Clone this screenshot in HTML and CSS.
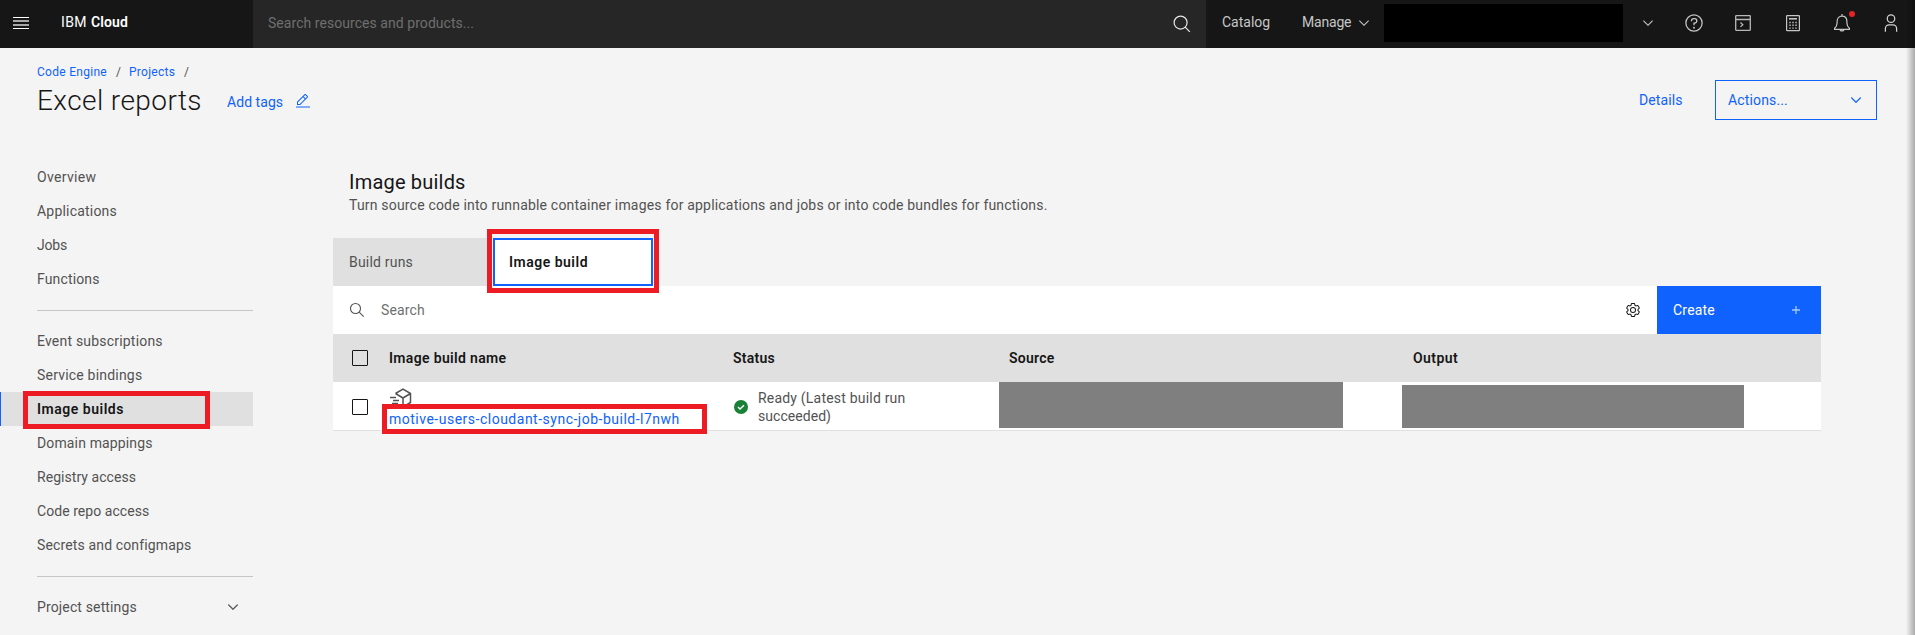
FILE: index.html
```
<!DOCTYPE html>
<html lang="en">
<head>
<meta charset="utf-8">
<title>Excel reports - Image builds</title>
<link rel="stylesheet" href="styles.css">
</head>
<body>
<header class="topbar">
  <div class="brand">
    <svg class="menu" width="16" height="12" viewBox="0 0 16 12"><path fill="#fff" d="M0 0h16v1H0zM0 11h16v1H0z"/><path fill="#a8a8a8" d="M0 3h16v2H0zM0 7h16v2H0z"/></svg>
    <span class="ibm">IBM</span><span class="cloud">Cloud</span>
  </div>
  <div class="global-search">
    <span class="hint">Search resources and products...</span>
    <svg width="18" height="18" viewBox="0 0 18 18" fill="none" stroke="#e8e8e8" stroke-width="1.2"><circle cx="7.6" cy="7.6" r="6.5"/><path d="M12.2 12.2l4.6 4.6"/></svg>
  </div>
  <nav class="links">
    <span class="catalog">Catalog</span>
    <span class="manage">Manage</span>
    <svg class="manage-chevron" width="16" height="16" viewBox="0 0 16 16" fill="#c6c6c6"><path d="M8 11L3 6l.7-.7L8 9.6l4.3-4.3.7.7z"/></svg>
    <span class="account"></span>
    <svg class="account-chevron" width="16" height="16" viewBox="0 0 16 16" fill="#c6c6c6"><path d="M8 11L3 6l.7-.7L8 9.6l4.3-4.3.7.7z"/></svg>
  </nav>
  <div class="tools">
    <svg width="20" height="20" viewBox="0 0 32 32" fill="#c6c6c6"><path d="M16 2a14 14 0 1 0 14 14A14 14 0 0 0 16 2zm0 26a12 12 0 1 1 12-12 12 12 0 0 1-12 12z"/><circle cx="16" cy="23.5" r="1.5"/><path d="M17 8h-1.500A4.490 4.490 0 0 0 11 12.500V13h2v-.5A2.500 2.500 0 0 1 15.500 10H17a2.500 2.500 0 0 1 0 5h-2v4.500h2V17a4.500 4.500 0 0 0 0-9z"/></svg>
    <svg width="20" height="20" viewBox="0 0 20 20" fill="none" stroke="#b8b8b8" stroke-width="1.300"><rect x="2.700" y="2.700" width="14.600" height="14.600" rx=".5"/><path d="M2.700 6.500h14.600M7.500 9.500l2.300 2.200-2.300 2.200"/></svg>
    <svg width="20" height="20" viewBox="0 0 20 20" fill="none" stroke="#c6c6c6" stroke-width="1.200"><rect x="3.600" y="2.600" width="12.800" height="15" rx=".6"/><path stroke-width="1.600" d="M6 5.800h8"/><path stroke-width="1.400" stroke-dasharray="1.400 1.600" d="M6.300 9.500h8M6.300 12.300h8M6.300 15.100h8"/></svg>
    <span class="bell">
      <svg width="20" height="20" viewBox="0 0 20 20" fill="none" stroke="#c6c6c6" stroke-width="1.200"><path d="M10 1v2M2.600 16.400v-1.200c1.900-1.600 2.500-3.200 2.500-5.200V8.400C5.100 5.200 7.100 3.100 10 3.100s4.900 2.100 4.900 5.300V10c0 2 .6 3.600 2.500 5.200v1.200zM8 16.600c.2 1.800 3.800 1.800 4 0"/></svg>
      <i class="dot"></i>
    </span>
    <svg width="20" height="20" viewBox="0 0 32 32" fill="#d0d0d0"><path d="M16 4a5 5 0 1 1-5 5 5 5 0 0 1 5-5m0-2a7 7 0 1 0 7 7 7 7 0 0 0-7-7zM26 30h-2v-5a5 5 0 0 0-5-5h-6a5 5 0 0 0-5 5v5H6v-5a7 7 0 0 1 7-7h6a7 7 0 0 1 7 7z"/></svg>
  </div>
</header>

<section class="page-head">
  <div class="title-block">
    <div class="crumbs"><a class="crumb-engine">Code Engine</a><span>/</span><a class="crumb-projects">Projects</a><span>/</span></div>
    <div class="title-row">
      <h1>Excel reports</h1>
      <a class="add-tags">Add tags</a>
      <svg width="16" height="16" viewBox="0 0 32 32" fill="#0f62fe"><path d="M2 27h28v2H2zM25.400 9c.8-.8.8-2 0-2.800l-3.600-3.600c-.8-.8-2-.8-2.800 0l-15 15V24h6.400zM20.400 4L24 7.600l-3 3L17.400 7zM6 22v-3.600l10-10 3.600 3.600-10 10z"/></svg>
    </div>
  </div>
  <a class="details">Details</a>
  <div class="actions"><span>Actions...</span><svg width="16" height="16" viewBox="0 0 16 16" fill="#0f62fe" stroke="#0f62fe" stroke-width=".3"><path d="M8 11L3 6l.7-.7L8 9.600l4.300-4.300.7.7z"/></svg></div>
</section>

<div class="body">
  <nav class="sidebar">
    <a class="loose">Overview</a>
    <a class="mid">Applications</a>
    <a class="tight">Jobs</a>
    <a class="snug">Functions</a>
    <hr>
    <a class="mid">Event subscriptions</a>
    <a class="mid">Service bindings</a>
    <a class="active">Image builds<i class="mark"></i></a>
    <a class="snug">Domain mappings</a>
    <a class="close">Registry access</a>
    <a class="close">Code repo access</a>
    <a class="snug">Secrets and configmaps</a>
    <hr>
    <a class="snug expandable">Project settings<svg width="16" height="16" viewBox="0 0 16 16" fill="#525252" stroke="#525252" stroke-width=".3"><path d="M8 11L3 6l.7-.7L8 9.600l4.300-4.300.7.7z"/></svg></a>
  </nav>

  <main class="content">
    <h2>Image builds</h2>
    <p class="desc">Turn source code into runnable container images for applications and jobs or into code bundles for functions.</p>
    <div class="tabs">
      <div class="tab">Build runs</div>
      <div class="tab selected">Image build<i class="mark"></i></div>
    </div>
    <div class="toolbar">
      <svg class="find" width="16" height="16" viewBox="0 0 16 16" fill="none" stroke="#525252" stroke-width="1.100"><circle cx="6.500" cy="6.500" r="5"/><path d="M10.200 10.200l4.500 4.500"/></svg>
      <span class="find-hint">Search</span>
      <svg class="gear" width="16" height="16" viewBox="0 0 32 32" fill="#161616"><path d="M27 16.760c0-.25 0-.5 0-.76s0-.51 0-.77l1.920-1.680A2 2 0 0 0 29.300 11L26.940 7a2 2 0 0 0-1.730-1 2 2 0 0 0-.64.1l-2.430.82a11.350 11.350 0 0 0-1.310-.75l-.51-2.520a2 2 0 0 0-2-1.610H13.640a2 2 0 0 0-2 1.610l-.51 2.520a11.480 11.480 0 0 0-1.320.75L7.430 6.060A2 2 0 0 0 6.790 6 2 2 0 0 0 5.060 7L2.700 11a2 2 0 0 0 .41 2.510L5 15.240c0 .25 0 .5 0 .76s0 .51 0 .77L3.110 18.450A2 2 0 0 0 2.700 21L5.060 25a2 2 0 0 0 1.730 1 2 2 0 0 0 .64-.1l2.430-.82a11.350 11.350 0 0 0 1.310.75l.51 2.520a2 2 0 0 0 2 1.610h4.720a2 2 0 0 0 2-1.610l.51-2.520a11.480 11.480 0 0 0 1.320-.75l2.420.82a2 2 0 0 0 .64.1 2 2 0 0 0 1.730-1L29.300 21a2 2 0 0 0-.41-2.510zM25.210 24l-3.430-1.160a8.860 8.860 0 0 1-2.710 1.570L18.360 28H13.640l-.71-3.550a9.360 9.360 0 0 1-2.700-1.570L6.790 24 4.430 20l2.720-2.400a8.900 8.900 0 0 1 0-3.130L4.430 12 6.790 8l3.430 1.160a8.860 8.860 0 0 1 2.710-1.570L13.640 4h4.720l.71 3.550a9.360 9.360 0 0 1 2.700 1.570L25.210 8 27.570 12l-2.720 2.400a8.900 8.900 0 0 1 0 3.130L27.570 20z"/><path d="M16 22a6 6 0 1 1 6-6 5.940 5.940 0 0 1-6 6zm0-10a3.910 3.910 0 0 0-4 4 3.910 3.910 0 0 0 4 4 3.910 3.910 0 0 0 4-4 3.910 3.910 0 0 0-4-4z"/></svg>
      <div class="create"><span>Create</span><svg width="8" height="8" viewBox="0 0 8 8" fill="none" stroke="#a6c8ff" stroke-width="1.300"><path d="M4 0v8M0 4h8"/></svg></div>
    </div>
    <div class="row head">
      <div class="check"><i class="box"></i></div>
      <div class="c-name">Image build name</div>
      <div class="c-status">Status</div>
      <div class="c-source">Source</div>
      <div class="c-output">Output</div>
    </div>
    <div class="row item">
      <div class="check"><i class="box"></i></div>
      <div class="name">
        <svg width="23" height="23" viewBox="0 0 23 23" fill="none" stroke="#525252" stroke-width="1.500"><path d="M6.500 5.500L14 1.200l7.500 4.300v9L14 19v-9L6.500 5.500M14 10l7.500-4.500M1 9.500h6M4 12.500h6M3 15.500h6"/></svg>
        <a>motive-users-cloudant-sync-job-build-l7nwh</a>
        <i class="mark"></i>
      </div>
      <div class="status">
        <svg width="14" height="14" viewBox="0 0 14 14"><circle cx="7" cy="7" r="7" fill="#198038"/><path d="M4 7.100l2 2L10 5.200" fill="none" stroke="#fff" stroke-width="1.400"/></svg>
        <span>Ready (Latest build run<br><span class="close">succeeded)</span></span>
      </div>
      <div class="redacted source"></div>
      <div class="redacted output"></div>
    </div>
  </main>
</div>
<div class="edge"></div>
</body>
</html>
```
FILE: styles.css
```
* { box-sizing: border-box; }

body {
  margin: 0;
  width: 1915px;
  height: 635px;
  overflow: hidden;
  position: relative;
  background: #f4f4f4;
  color: #525252;
  font: 14px/18px Roboto, "Liberation Sans", sans-serif;
}

svg { display: block; flex: none; }
a { color: #0f62fe; }
h1, h2, p { margin: 0; font-weight: 400; }

/* Red highlight frames */
.mark { position: absolute; border: 5px solid #ed1c24; }

/* Top bar */
.topbar { display: flex; height: 48px; background: #161616; color: #c6c6c6; }
.brand { display: flex; width: 253px; padding: 13px 0 0 13px; color: #fff; }
.menu { margin: 4px 32px 0 0; }
.ibm { width: 30px; letter-spacing: .41px; }
.cloud { font-weight: 600; letter-spacing: .12px; }
.global-search { display: flex; justify-content: space-between; width: 953px; padding: 15px 15px 0 15px; background: #262626; color: #6f6f6f; }
.hint { margin-top: -1px; letter-spacing: .05px; }
.links { display: flex; flex: none; width: 450px; padding: 13px 0 0 16px; }
.catalog { width: 80px; }
.manage { width: 54px; letter-spacing: -.2px; }
.manage-chevron { margin: 2px 12px 0 0; }
.account { width: 239px; height: 38px; margin: -9px 17px 0 0; background: #000; }
.account-chevron { margin-top: 2px; }
.tools { display: flex; align-items: flex-start; gap: 29.300px; padding: 13px 0 0 28px; }
.bell { position: relative; }
.dot { position: absolute; left: 17px; top: -2px; width: 6px; height: 6px; border-radius: 50%; background: #e62325; }

/* Page heading */
.page-head { display: flex; height: 112px; padding: 15px 38px 0 37px; }
.title-block { flex: 1; }
.crumbs { display: flex; font-size: 12px; letter-spacing: .28px; }
.crumbs a + span { margin: 0 9px 0 9px; width: 4px; }
.crumb-engine { width: 70px; }
.crumb-projects { width: 46px; }
.title-row { display: flex; align-items: center; margin-top: 1px; }
h1 { width: 190px; color: #161616; font-size: 28px; font-weight: 300; line-height: 37px; letter-spacing: .42px; }
.add-tags { width: 68px; padding-top: 3px; letter-spacing: .05px; }
.title-row svg { margin-top: 1px; }
.details { width: 76px; padding-top: 28px; letter-spacing: .09px; }
.actions { display: flex; align-items: center; justify-content: space-between; width: 162px; height: 40px; margin-top: 17px; padding: 0 12px; border: 1px solid #0f62fe; color: #0f62fe; letter-spacing: .15px; }

.body { display: flex; }

/* Side navigation */
.sidebar { width: 253px; margin-right: 80px; }
.sidebar a { display: block; position: relative; height: 34px; padding-left: 37px; color: #525252; line-height: 34px; }
.sidebar hr { height: 1px; margin: 14px 0 13px 37px; border: 0; background: #c6c6c6; }
.sidebar .active { background: #e0e0e0; box-shadow: inset 1px 0 #0f62fe; color: #161616; font-weight: 600; letter-spacing: .52px; }
.active .mark { left: 23px; top: -1px; width: 187px; height: 38px; }
.sidebar .expandable { display: flex; align-items: center; justify-content: space-between; padding-right: 12px; }
.loose { letter-spacing: .34px; }
.mid { letter-spacing: .2px; }
.snug { letter-spacing: .14px; }
.close { letter-spacing: .05px; }
.tight { letter-spacing: -.2px; }

/* Main column */
.content { width: 1488px; padding-top: 8px; }
h2 { padding-left: 16px; color: #161616; font-size: 20px; line-height: 28px; letter-spacing: .2px; }
.desc { padding-left: 16px; letter-spacing: .19px; }
.tabs { display: flex; gap: 1px; height: 48px; margin-top: 24px; }
.tab { width: 159px; padding-left: 16px; background: #e0e0e0; line-height: 48px; letter-spacing: .2px; }
.tab.selected { position: relative; width: 160px; padding-left: 16px; background: #fff; outline: 2px solid #0f62fe; outline-offset: -2px; color: #161616; font-weight: 600; letter-spacing: .5px; }
.selected .mark { left: -6px; top: -9px; width: 172px; height: 64px; }
.toolbar { display: flex; align-items: center; height: 48px; background: #fff; }
.find { margin: 0 16px 0 16px; }
.find-hint { flex: 1; color: #6f6f6f; letter-spacing: .16px; }
.gear { margin-right: 16px; }
.create { display: flex; align-items: center; justify-content: space-between; width: 164px; height: 48px; padding: 0 21px 0 16px; background: #0f62fe; color: #fff; letter-spacing: .2px; }

/* Table */
.row { display: grid; grid-template-columns: 56px 344px 276px 404px 408px; height: 48px; }
.head { align-items: center; background: #e0e0e0; color: #161616; font-weight: 600; letter-spacing: .25px; }
.c-name { letter-spacing: .34px; }
.c-output { letter-spacing: .41px; }
.check { padding-left: 19px; }
.box { display: block; width: 16px; height: 16px; border: 1px solid #161616; border-radius: 1px; }
.item { grid-template-columns: 49px 352px 265px 403px 419px; height: 49px; border-bottom: 1px solid #e0e0e0; background: #fff; }
.item .check { padding-top: 17px; }
.name { position: relative; padding: 6px 0 0 7px; letter-spacing: .5px; }
.name svg { height: 23px; margin-bottom: -1px; }
.name a { display: block; }
.name .mark { left: 0; top: 22px; width: 325px; height: 30px; }
.status { display: flex; gap: 10px; padding-top: 7px; letter-spacing: .2px; }
.status svg { margin-top: 11px; }
.redacted { background: #7f7f7f; }
.source { width: 344px; height: 46px; }
.output { width: 342px; height: 43px; margin-top: 3px; }

/* Shadow along the right edge of the window */
.edge { position: absolute; top: 0; right: 0; width: 9px; height: 635px; background: linear-gradient(to right, rgba(0, 0, 0, 0), rgba(0, 0, 0, .3)); }
```
